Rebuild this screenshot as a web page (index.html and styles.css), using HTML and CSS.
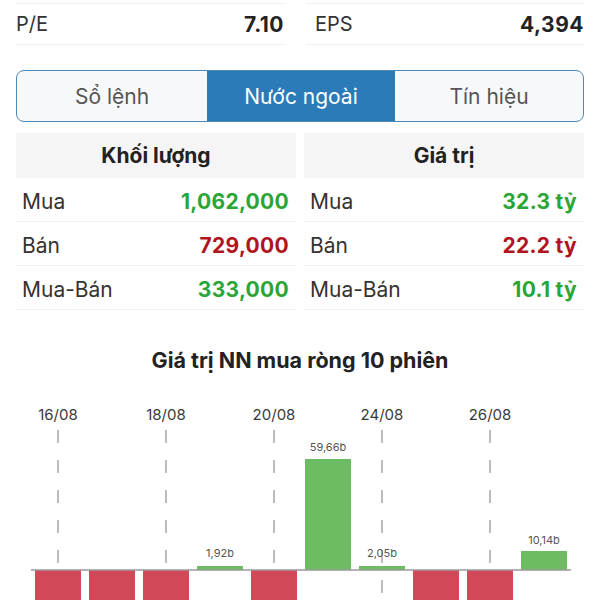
FILE: index.html
```html
<!DOCTYPE html>
<html lang="vi">
<head>
<meta charset="utf-8">
<title>Nước ngoài</title>
<link rel="stylesheet" href="styles.css">
</head>
<body>
<div class="page">
  <div class="stats">
    <div class="stat"><span class="stat-label">P/E</span><span class="stat-value">7.10</span></div>
    <div class="stat stat-right"><span class="stat-label">EPS</span><span class="stat-value">4,394</span></div>
  </div>

  <div class="tabs">
    <div class="tab">Sổ lệnh</div>
    <div class="tab tab-active">Nước ngoài</div>
    <div class="tab">Tín hiệu</div>
  </div>

  <div class="tables">
    <div class="col">
      <div class="col-head">Khối lượng</div>
      <div class="row"><span class="lbl">Mua</span><span class="val up">1,062,000</span></div>
      <div class="row"><span class="lbl">Bán</span><span class="val down">729,000</span></div>
      <div class="row"><span class="lbl">Mua-Bán</span><span class="val up">333,000</span></div>
    </div>
    <div class="col">
      <div class="col-head">Giá trị</div>
      <div class="row"><span class="lbl">Mua</span><span class="val up">32.3 tỷ</span></div>
      <div class="row"><span class="lbl">Bán</span><span class="val down">22.2 tỷ</span></div>
      <div class="row"><span class="lbl">Mua-Bán</span><span class="val up">10.1 tỷ</span></div>
    </div>
  </div>

  <div class="chart-title">Giá trị NN mua ròng 10 phiên</div>

  <svg class="chart" width="600" height="220" viewBox="0 0 600 220">
    <g class="dates">
      <text x="58" y="40">16/08</text>
      <text x="166" y="40">18/08</text>
      <text x="274" y="40">20/08</text>
      <text x="382" y="40">24/08</text>
      <text x="490" y="40">26/08</text>
    </g>
    <g class="grid">
      <line x1="58" y1="50" x2="58" y2="220"/>
      <line x1="166" y1="50" x2="166" y2="220"/>
      <line x1="274" y1="50" x2="274" y2="220"/>
      <line x1="382" y1="50" x2="382" y2="220"/>
      <line x1="490" y1="50" x2="490" y2="220"/>
    </g>
    <g class="neg">
      <rect x="35" y="190" width="46" height="40"/>
      <rect x="89" y="190" width="46" height="40"/>
      <rect x="143" y="190" width="46" height="40"/>
      <rect x="251" y="190" width="46" height="40"/>
      <rect x="413" y="190" width="46" height="40"/>
      <rect x="467" y="190" width="46" height="40"/>
    </g>
    <g class="pos">
      <rect x="197" y="186" width="46" height="4"/>
      <rect x="305" y="79" width="46" height="111"/>
      <rect x="359" y="186" width="46" height="4"/>
      <rect x="521" y="171" width="46" height="19"/>
    </g>
    <line class="axis" x1="31" y1="190" x2="571" y2="190"/>
    <g class="vals">
      <text x="220" y="177">1,92b</text>
      <text x="328" y="71">59,66b</text>
      <text x="382" y="177">2,05b</text>
      <text x="544" y="164">10,14b</text>
    </g>
  </svg>
</div>
</body>
</html>
```
FILE: styles.css
```css
* { box-sizing: border-box; }
html, body { margin: 0; padding: 0; background: #fff; }
body {
  font-family: "Inter", "Roboto", "Liberation Sans", sans-serif;
  color: #222;
  width: 600px;
  height: 600px;
  overflow: hidden;
}
.page { padding: 0 16px; }

.stats {
  display: grid;
  grid-template-columns: 268px 278px;
  column-gap: 22px;
  margin-top: 3px;
}
.stat {
  height: 42px;
  display: flex;
  justify-content: space-between;
  align-items: center;
  border-top: 1px solid #f0f0f0;
  border-bottom: 1px solid #f0f0f0;
  font-size: 20px;
}
.stat-right { padding-left: 9px; }
.stat-label { color: #333; }
.stat-value { font-weight: 700; font-size: 21px; color: #222; letter-spacing: 0.5px; }

.tabs {
  margin-top: 25px;
  height: 52px;
  display: grid;
  grid-template-columns: 190px 188px 1fr;
  border: 1.5px solid #4f88b5;
  border-radius: 8px;
  overflow: hidden;
  background: #f6f8fa;
}
.tab {
  display: flex;
  align-items: center;
  justify-content: center;
  font-size: 21px;
  color: #555;
}
.tab-active { background: #2b7bb9; color: #fff; }

.tables {
  margin-top: 11px;
  display: grid;
  grid-template-columns: 1fr 1fr;
  column-gap: 8px;
}
.col-head {
  height: 45px;
  background: #f5f5f5;
  display: flex;
  align-items: center;
  justify-content: center;
  font-weight: 700;
  font-size: 21px;
  color: #222;
}
.row {
  height: 44px;
  display: flex;
  justify-content: space-between;
  align-items: center;
  padding: 3px 7px 0 6px;
  border-bottom: 1px solid #f2f2f2;
  font-size: 21px;
}
.lbl { color: #333; }
.val { font-weight: 700; font-size: 21px; letter-spacing: 0.3px; }
.up { color: #2aa637; }
.down { color: #b0141e; }

.chart-title {
  margin-top: 38px;
  height: 24px;
  line-height: 24px;
  text-align: center;
  font-weight: 700;
  font-size: 21.5px;
  color: #222;
}
.chart {
  display: block;
  margin: 8px 0 0 -16px;
}
.dates text {
  font-family: "Inter", "Roboto", sans-serif;
  font-size: 15px;
  fill: #3a3a3a;
  text-anchor: middle;
}
.grid line {
  stroke: #a8a8a8;
  stroke-width: 1.5;
  stroke-dasharray: 13 17;
}
.neg rect { fill: #d34858; }
.pos rect { fill: #6dbb63; }
.axis { stroke: #9a9a9a; stroke-width: 1.5; }
.vals text {
  font-family: "Inter", "Roboto", sans-serif;
  font-size: 11px;
  fill: #555;
  text-anchor: middle;
}
```
